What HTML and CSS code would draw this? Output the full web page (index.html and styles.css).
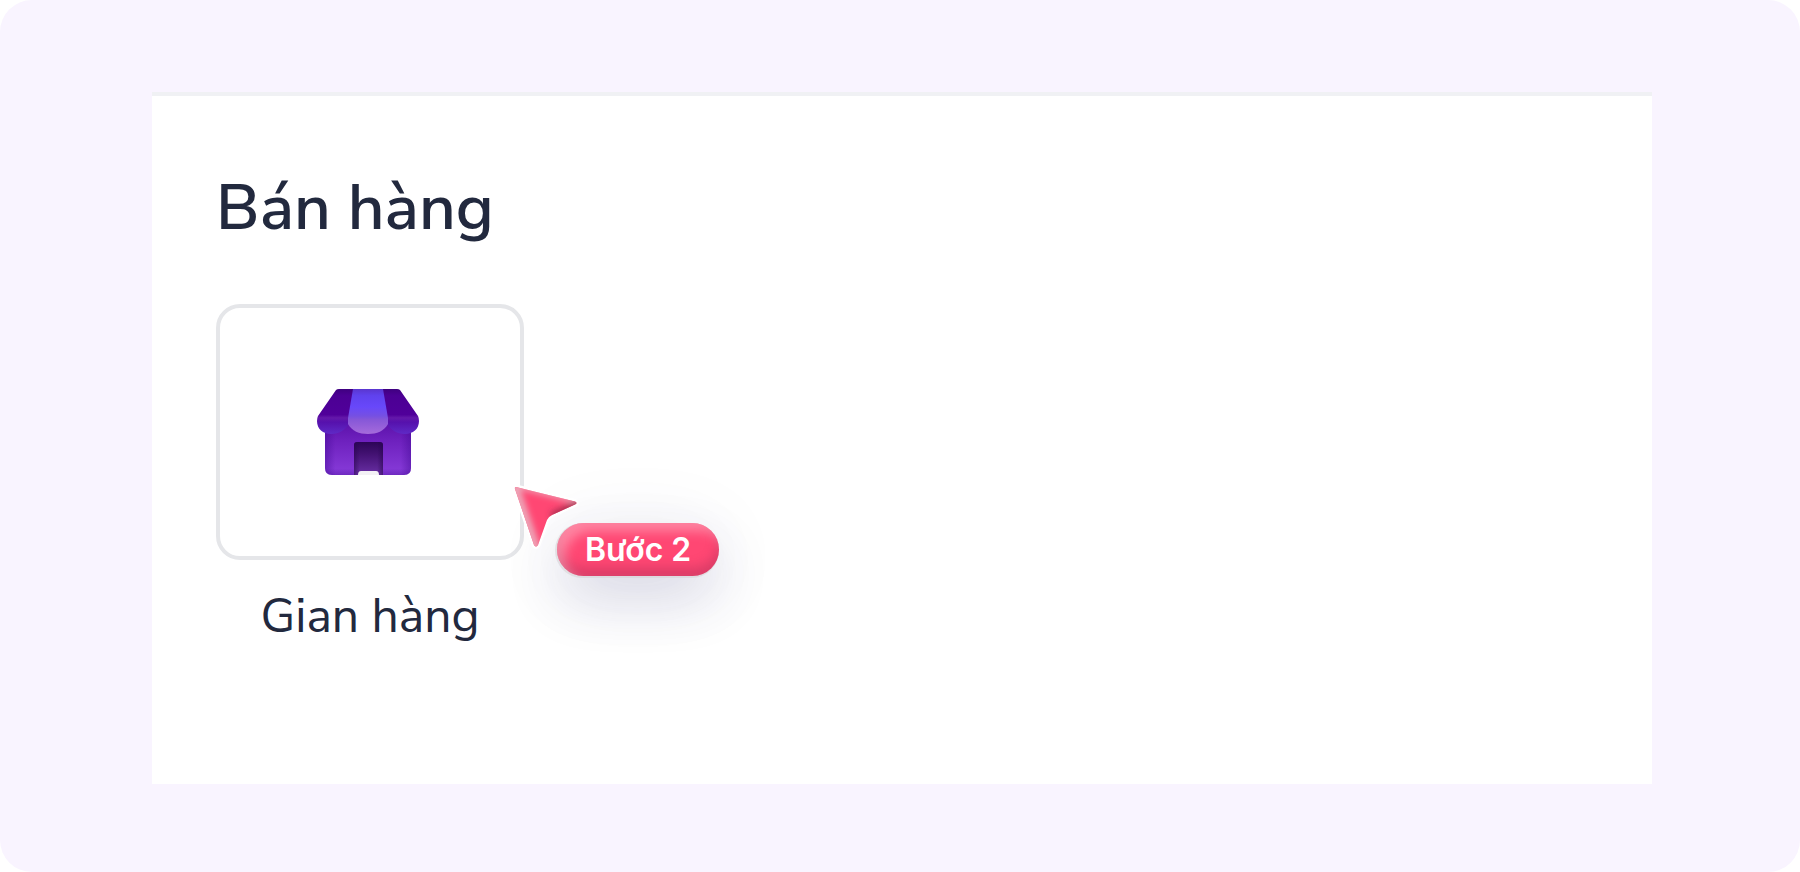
FILE: index.html
```
<!DOCTYPE html>
<html lang="vi">
  <head>
    <meta charset="UTF-8" />
    <meta name="viewport" content="width=device-width, initial-scale=1.0" />
    <title>Bán hàng</title>
    <link rel="stylesheet" href="styles.css">
  </head>
  <body>
    <main class="page">
      <section class="panel">
        <h1 class="panel-title">Bán hàng</h1>

        <div class="app">
          <a class="app-link" href="#gian-hang">
            <span class="app-tile">
              <svg class="store-icon" viewBox="0 0 106 86" aria-hidden="true">
                <defs>
                  <linearGradient id="wall" x1="0" y1="0" x2="0" y2="1">
                    <stop offset="0" stop-color="#5a10a8" />
                    <stop offset="0.35" stop-color="#6d20bd" />
                    <stop offset="1" stop-color="#883cda" />
                  </linearGradient>
                  <linearGradient id="wallEdge" x1="0" y1="0" x2="1" y2="0">
                    <stop offset="0" stop-color="#3d0690" stop-opacity="0.4" />
                    <stop offset="0.12" stop-color="#3d0690" stop-opacity="0" />
                    <stop offset="0.88" stop-color="#3d0690" stop-opacity="0" />
                    <stop offset="1" stop-color="#3d0690" stop-opacity="0.4" />
                  </linearGradient>
                  <linearGradient id="wallBase" x1="0" y1="0" x2="0" y2="1">
                    <stop offset="0.88" stop-color="#3d0690" stop-opacity="0" />
                    <stop offset="1" stop-color="#3d0690" stop-opacity="0.35" />
                  </linearGradient>
                  <linearGradient id="roof" gradientUnits="userSpaceOnUse" x1="0" y1="0" x2="0" y2="45">
                    <stop offset="0" stop-color="#3f0080" />
                    <stop offset="0.15" stop-color="#4c0094" />
                    <stop offset="0.57" stop-color="#50009a" />
                    <stop offset="0.64" stop-color="#6418aa" />
                    <stop offset="0.74" stop-color="#5611ad" />
                    <stop offset="1" stop-color="#5f2ac6" />
                  </linearGradient>
                  <linearGradient id="stripe" x1="0" y1="0" x2="0" y2="1">
                    <stop offset="0" stop-color="#5a36cf" />
                    <stop offset="0.15" stop-color="#6042ee" />
                    <stop offset="0.4" stop-color="#6848fa" />
                    <stop offset="0.6" stop-color="#7650e2" />
                    <stop offset="0.68" stop-color="#8657d8" />
                    <stop offset="1" stop-color="#a66bdb" />
                  </linearGradient>
                  <linearGradient id="door" x1="0" y1="0" x2="0" y2="1">
                    <stop offset="0" stop-color="#2c0557" />
                    <stop offset="0.4" stop-color="#451375" />
                    <stop offset="1" stop-color="#6a30a6" />
                  </linearGradient>
                  <linearGradient id="doorEdge" x1="0" y1="0" x2="1" y2="0">
                    <stop offset="0" stop-color="#26044e" stop-opacity="0.5" />
                    <stop offset="0.2" stop-color="#26044e" stop-opacity="0" />
                    <stop offset="0.8" stop-color="#26044e" stop-opacity="0" />
                    <stop offset="1" stop-color="#26044e" stop-opacity="0.5" />
                  </linearGradient>
                </defs>
                <path d="M8 32H94V79Q94 86 87 86H15Q8 86 8 79Z" fill="url(#wall)" />
                <path d="M8 32H94V79Q94 86 87 86H15Q8 86 8 79Z" fill="url(#wallEdge)" />
                <path d="M8 32H94V79Q94 86 87 86H15Q8 86 8 79Z" fill="url(#wallBase)" />
                <path d="M22 0H80Q82 0 83 1L101 27Q102 29 102 32C102 40 96 45 88 45C80 45 74 41 70 35H32C28 41 22 45 14 45C6 45 0 40 0 32Q0 29 1 27L19 1Q20 0 22 0Z" fill="url(#roof)" />
                <path d="M36 0H66L71 29V35C67 42 60 45 51 45C42 45 35 42 31 35V29Z" fill="url(#stripe)" />
                <path d="M37 86V56Q37 53 40 53H63Q66 53 66 56V86Z" fill="url(#door)" />
                <path d="M37 86V56Q37 53 40 53H63Q66 53 66 56V86Z" fill="url(#doorEdge)" />
                <path d="M41 86Q41 82 44 82H59Q62 82 62 86Z" fill="#f3f1f5" />
              </svg>
            </span>
            <span class="app-name">Gian hàng</span>
          </a>

          <div class="step">
            <svg class="step-arrow" viewBox="0 0 70 70" aria-hidden="true">
              <defs>
                <path id="arrowShape" d="M4 3L63 17.500Q66 19 63 20.500L40 31Q36 33 35 36L26 61Q24 64 22 61L3 5Q2.500 2.500 4 3Z" />
                <clipPath id="arrowClip"><use href="#arrowShape" /></clipPath>
                <filter id="soft" x="-30%" y="-30%" width="160%" height="160%">
                  <feGaussianBlur stdDeviation="3" />
                </filter>
              </defs>
              <use href="#arrowShape" fill="#fff" stroke="#fff" stroke-width="5" stroke-linejoin="round" />
              <use href="#arrowShape" fill="#ff4773" />
              <g clip-path="url(#arrowClip)">
                <g fill="none" filter="url(#soft)">
                  <path d="M66 17L2 1" stroke="#ecaabb" stroke-width="5" />
                  <path d="M2 1L25 68" stroke="#ecaabb" stroke-width="9" />
                  <path d="M72 18L40 33" stroke="#a82e50" stroke-width="9" />
                </g>
              </g>
            </svg>
            <span class="step-label">Bước 2</span>
          </div>
        </div>
      </section>
    </main>
  </body>
</html>
```
FILE: styles.css
```
* {
  box-sizing: border-box;
}

body {
  margin: 0;
  background-color: #fff;
  color: #22293e;
  font-family: "Nunito Sans", Nunito, Lato, "Noto Sans", sans-serif;
}

.page {
  display: flex;
  min-height: 100vh;
  padding: 92px 148px 88px 152px;
  background-color: #f9f4ff;
  border-radius: 32px;
}

.panel {
  flex: 1;
  padding: 76px 64px;
  background: linear-gradient(#f0f1f4 4px, #fff 4px);
}

.panel-title {
  margin: 0 0 56px;
  font-size: 64px;
  line-height: 80px;
  font-weight: 600;
}

.app {
  position: relative;
  width: 308px;
}

.app-link {
  display: flex;
  flex-direction: column;
  gap: 24px;
  color: inherit;
  text-align: center;
  text-decoration: none;
}

.app-tile {
  display: flex;
  align-items: center;
  justify-content: center;
  height: 256px;
  border: 4px solid #e5e6e9;
  border-radius: 24px;
}

.store-icon {
  width: 106px;
  height: 86px;
}

.app-name {
  font-size: 48px;
  line-height: 64px;
}

/* step pointer lying over the tile corner */
.step {
  position: absolute;
  top: 180px;
  left: 296px;
  display: grid;
}

.step-arrow {
  grid-area: 1 / 1;
  z-index: 1;
  width: 70px;
  height: 70px;
  overflow: visible;
}

.step-label {
  grid-area: 1 / 1;
  margin: 39px 0 0 45px;
  padding: 0 28px;
  border-radius: 28px;
  background-color: #ff4773;
  color: #fff;
  font-family: Inter, sans-serif;
  font-size: 32px;
  line-height: 53px;
  font-weight: 600;
  white-space: nowrap;
  box-shadow:
    inset 8px 8px 12px rgba(255, 255, 255, 0.35),
    inset 0 -8px 12px rgba(150, 40, 80, 0.35),
    -1px 1px 0 1px rgba(215, 212, 215, 0.6),
    0 24px 56px rgba(50, 50, 120, 0.16),
    0 8px 80px rgba(50, 50, 120, 0.08);
}
```
